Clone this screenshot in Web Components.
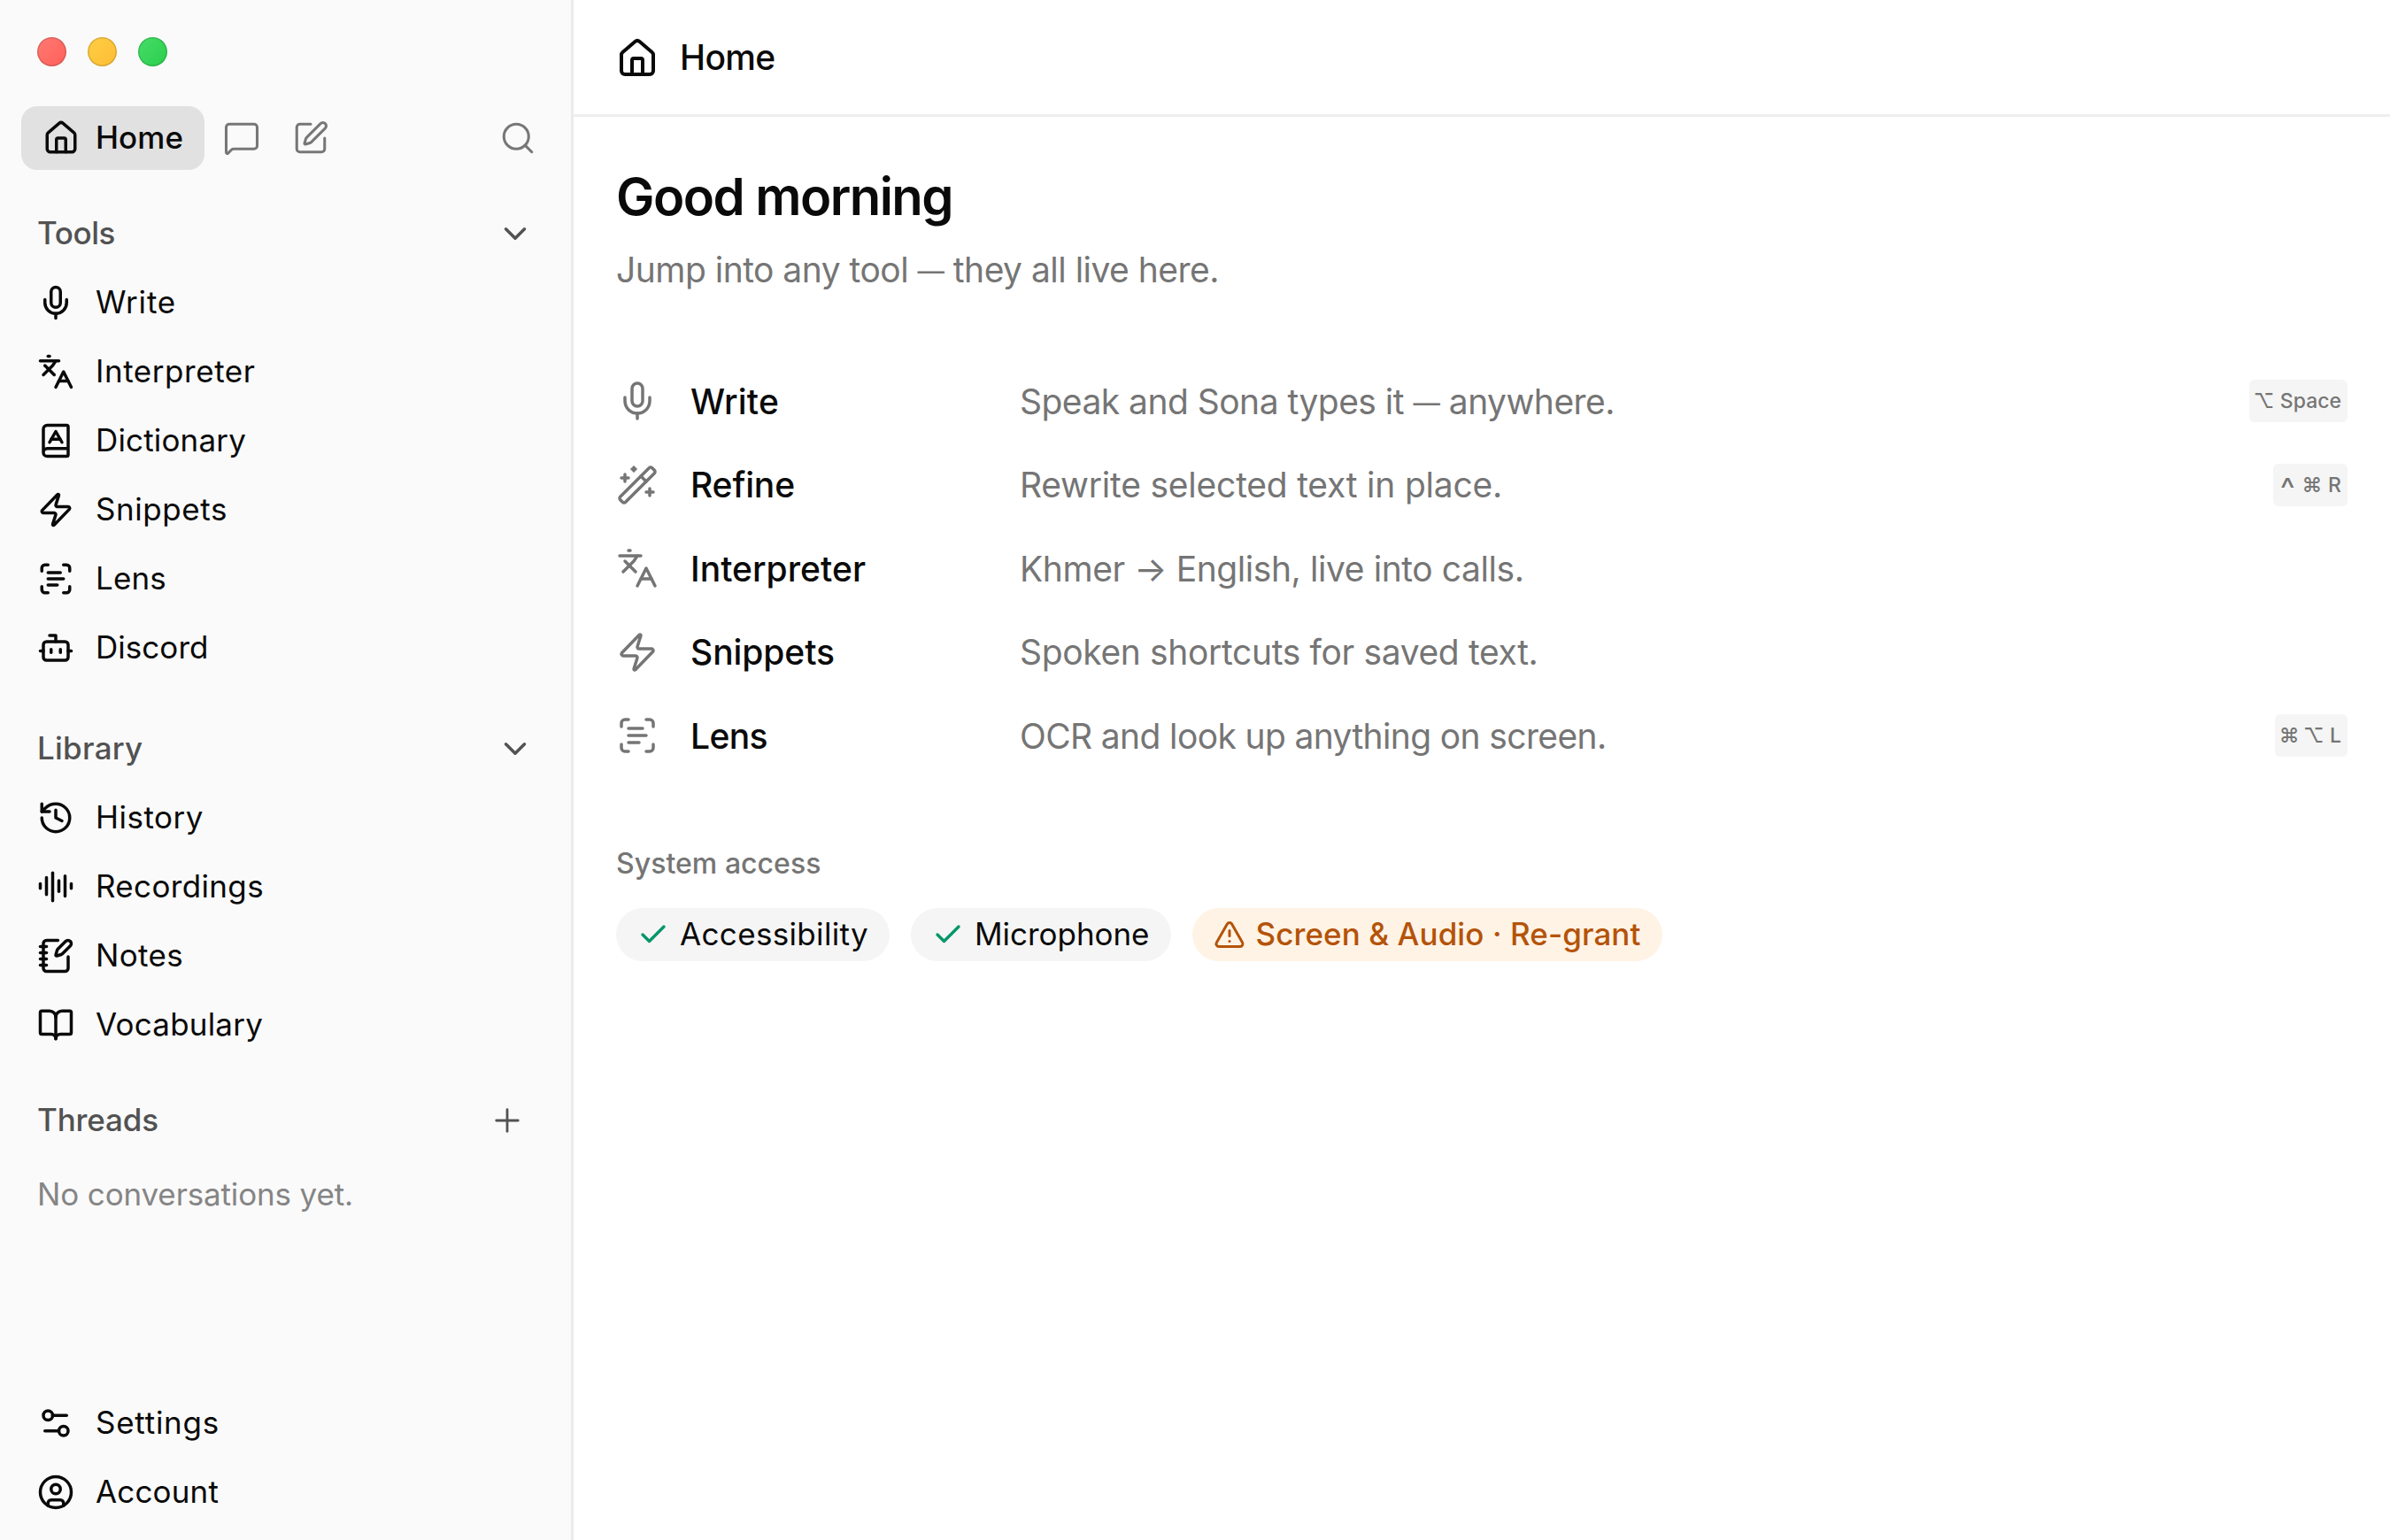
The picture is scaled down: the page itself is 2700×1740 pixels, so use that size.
<!DOCTYPE html>
<html lang="en">
<head>
<meta charset="utf-8">
<title>Sona</title>
<style>
    html, body {
        margin: 0;
        height: 100%;
        background: #fff;
    }
    body {
        font-family: Inter, "Liberation Sans", sans-serif;
        color: #0a0a0a;
    }
</style>
</head>
<body>
<sona-app>
    <sona-sidebar slot="sidebar">
        <nav-section label="Tools" width="88" icon="chevron">
            <nav-item icon="mic" width="91">Write</nav-item>
            <nav-item icon="languages" width="180.5">Interpreter</nav-item>
            <nav-item icon="dictionary" width="170">Dictionary</nav-item>
            <nav-item icon="zap" width="149">Snippets</nav-item>
            <nav-item icon="scan" width="80">Lens</nav-item>
            <nav-item icon="bot" width="127.5">Discord</nav-item>
        </nav-section>
        <nav-section class="library" label="Library" width="119.5" icon="chevron">
            <nav-item icon="history" width="122">History</nav-item>
            <nav-item icon="audio" width="190">Recordings</nav-item>
            <nav-item icon="notebook" width="99">Notes</nav-item>
            <nav-item icon="book" width="189">Vocabulary</nav-item>
        </nav-section>
        <nav-section class="threads" label="Threads" width="137" icon="plus">
            <fit-text class="empty" width="357">No conversations yet.</fit-text>
        </nav-section>
        <nav-item slot="footer" icon="settings" width="140">Settings</nav-item>
        <nav-item slot="footer" icon="user" width="139">Account</nav-item>
    </sona-sidebar>

    <page-header icon="house" width="107.5">Home</page-header>

    <home-page>
        <tool-row icon="mic" name="Write" width="100" info-width="672">Speak and Sona types it — anywhere.
            <key-combo slot="keys" keys="⌥ Space"></key-combo></tool-row>
        <tool-row icon="wand" name="Refine" width="118" info-width="545">Rewrite selected text in place.
            <key-combo slot="keys" keys="^ ⌘ R"></key-combo></tool-row>
        <tool-row icon="languages" name="Interpreter" width="198" info-width="569.5">Khmer → English, live into calls.</tool-row>
        <tool-row icon="zap" name="Snippets" width="163" info-width="585.5">Spoken shortcuts for saved text.</tool-row>
        <tool-row icon="scan" name="Lens" width="87" info-width="662.5">OCR and look up anything on screen.
            <key-combo slot="keys" keys="⌘ ⌥ L"></key-combo></tool-row>
        <access-pill slot="access" icon="check" width="213">Accessibility</access-pill>
        <access-pill slot="access" icon="check" width="197.5">Microphone</access-pill>
        <access-pill slot="access" icon="alert" width="435" warn>Screen &amp; Audio · Re-grant</access-pill>
    </home-page>
</sona-app>

<script>
const ICONS = {
    house: '<path d="M15 21v-8a1 1 0 0 0-1-1h-4a1 1 0 0 0-1 1v8"/><path d="M3 10a2 2 0 0 1 .709-1.528l7-6a2 2 0 0 1 2.582 0l7 6A2 2 0 0 1 21 10v9a2 2 0 0 1-2 2H5a2 2 0 0 1-2-2z"/>',
    message: '<path d="M22 17a2 2 0 0 1-2 2H6.828a2 2 0 0 0-1.414.586l-2.202 2.202A.71.71 0 0 1 2 21.286V5a2 2 0 0 1 2-2h16a2 2 0 0 1 2 2z"/>',
    compose: '<path d="M12 3H5a2 2 0 0 0-2 2v14a2 2 0 0 0 2 2h14a2 2 0 0 0 2-2v-7"/><path d="M18.375 2.625a1 1 0 0 1 3 3l-9.013 9.014a2 2 0 0 1-.853.505l-2.873.84a.5.5 0 0 1-.62-.62l.84-2.873a2 2 0 0 1 .506-.852z"/>',
    search: '<circle cx="11" cy="11" r="8"/><path d="m21 21-4.34-4.34"/>',
    chevron: '<path d="m6 9 6 6 6-6"/>',
    plus: '<path d="M5 12h14"/><path d="M12 5v14"/>',
    mic: '<path d="M12 19v3"/><path d="M19 10v2a7 7 0 0 1-14 0v-2"/><rect x="9" y="2" width="6" height="13" rx="3"/>',
    languages: '<path d="m5 8 6 6"/><path d="m4 14 6-6 2-3"/><path d="M2 5h12"/><path d="M7 2h1"/><path d="m22 22-5-10-5 10"/><path d="M14 18h6"/>',
    dictionary: '<path d="M4 19.5v-15A2.5 2.5 0 0 1 6.5 2H19a1 1 0 0 1 1 1v18a1 1 0 0 1-1 1H6.5a1 1 0 0 1 0-5H20"/><path d="m8 13 4-7 4 7"/><path d="M9.1 11h5.7"/>',
    zap: '<path d="M4 14a1 1 0 0 1-.78-1.63l9.9-10.2a.5.5 0 0 1 .86.46l-1.92 6.02A1 1 0 0 0 13 10h7a1 1 0 0 1 .78 1.63l-9.9 10.2a.5.5 0 0 1-.86-.46l1.92-6.02A1 1 0 0 0 11 14z"/>',
    scan: '<path d="M3 7V5a2 2 0 0 1 2-2h2"/><path d="M17 3h2a2 2 0 0 1 2 2v2"/><path d="M21 17v2a2 2 0 0 1-2 2h-2"/><path d="M7 21H5a2 2 0 0 1-2-2v-2"/><path d="M7 8h8"/><path d="M7 12h10"/><path d="M7 16h6"/>',
    bot: '<path d="M12 8V4H8"/><rect x="4" y="8" width="16" height="12" rx="2"/><path d="M2 14h2"/><path d="M20 14h2"/><path d="M15 13v2"/><path d="M9 13v2"/>',
    history: '<path d="M3 12a9 9 0 1 0 9-9 9.75 9.75 0 0 0-6.74 2.74L3 8"/><path d="M3 3v5h5"/><path d="M12 7v5l4 2"/>',
    audio: '<path d="M2 10v3"/><path d="M6 6v11"/><path d="M10 3v18"/><path d="M14 8v7"/><path d="M18 5v13"/><path d="M22 10v3"/>',
    notebook: '<path d="M13.4 2H6a2 2 0 0 0-2 2v16a2 2 0 0 0 2 2h12a2 2 0 0 0 2-2v-7.4"/><path d="M2 6h4"/><path d="M2 10h4"/><path d="M2 14h4"/><path d="M2 18h4"/><path d="M21.378 5.626a1 1 0 1 0-3.004-3.004l-5.01 5.012a2 2 0 0 0-.506.854l-.837 2.87a.5.5 0 0 0 .62.62l2.87-.837a2 2 0 0 0 .854-.506z"/>',
    book: '<path d="M12 7v14"/><path d="M3 18a1 1 0 0 1-1-1V4a1 1 0 0 1 1-1h5a4 4 0 0 1 4 4 4 4 0 0 1 4-4h5a1 1 0 0 1 1 1v13a1 1 0 0 1-1 1h-6a3 3 0 0 0-3 3 3 3 0 0 0-3-3z"/>',
    settings: '<path d="M14 17H5"/><path d="M19 7h-9"/><circle cx="17" cy="17" r="3"/><circle cx="7" cy="7" r="3"/>',
    user: '<circle cx="12" cy="12" r="10"/><circle cx="12" cy="10" r="3"/><path d="M7 20.662V19a2 2 0 0 1 2-2h6a2 2 0 0 1 2 2v1.662"/>',
    wand: '<path d="m21.64 3.64-1.28-1.28a1.21 1.21 0 0 0-1.72 0L2.36 18.64a1.21 1.21 0 0 0 0 1.72l1.28 1.28a1.2 1.2 0 0 0 1.72 0L21.64 5.36a1.2 1.2 0 0 0 0-1.72"/><path d="m14 7 3 3"/><path d="M5 6v4"/><path d="M19 14v4"/><path d="M10 2v2"/><path d="M7 8H3"/><path d="M21 16h-4"/><path d="M11 3H9"/>',
    check: '<path d="M20 6 9 17l-5-5"/>',
    alert: '<path d="m21.73 18-8-14a2 2 0 0 0-3.48 0l-8 14A2 2 0 0 0 4 21h16a2 2 0 0 0 1.73-3"/><path d="M12 9v4"/><path d="M12 17h.01"/>'
};

// Inter's em dash is very wide, so it is set a little smaller in running text
const shortDash = text => text.replace('—', '<span style="font-size: .78em; line-height: 0; vertical-align: .08em">—</span>');

// Base class: opens the shadow root and fills it from render()
class SonaElement extends HTMLElement {
    constructor() {
        super();
        this.attachShadow({ mode: 'open' });
    }

    connectedCallback() {
        this.shadowRoot.innerHTML = this.render();
    }

    attr(name, fallback = '') {
        return this.getAttribute(name) || fallback;
    }
}

class UiIcon extends SonaElement {
    render() {
        const size = this.attr('size', '42');
        return `
            <style>
                :host { display: block; flex: none; width: ${size}px; height: ${size}px; }
                svg { display: block; }
            </style>
            <svg width="${size}" height="${size}" viewBox="0 0 24 24" fill="none" stroke="currentColor"
                stroke-width="${this.attr('stroke', '2')}" stroke-linecap="round" stroke-linejoin="round">${ICONS[this.attr('name')]}</svg>
        `;
    }
}

// One line of text, tracked so that it fills the given width
class FitText extends SonaElement {
    connectedCallback() {
        super.connectedCallback();
        this.fit();
        document.fonts.ready.then(() => this.fit());
    }

    fit() {
        const span = this.shadowRoot.querySelector('span');
        const target = parseFloat(this.attr('width', '0'));
        const length = this.textContent.trim().length;
        span.style.letterSpacing = '0px';
        const natural = span.getBoundingClientRect().width;
        if (target && length && natural) {
            span.style.letterSpacing = (target - natural) / length + 'px';
        }
    }

    render() {
        return `
            <style>
                :host { display: block; flex: none; white-space: nowrap; width: ${this.attr('width')}px; }
                span { display: inline-block; }
            </style>
            <span><slot></slot></span>
        `;
    }
}

class SonaApp extends SonaElement {
    render() {
        return `
            <style>
                :host { display: flex; height: 1740px; overflow: hidden; }
                main { flex: 1; display: flex; flex-direction: column; min-width: 0; }
            </style>
            <slot name="sidebar"></slot>
            <main><slot></slot></main>
        `;
    }
}

class SonaSidebar extends SonaElement {
    render() {
        return `
            <style>
                :host {
                    display: flex;
                    flex-direction: column;
                    flex: none;
                    box-sizing: border-box;
                    width: 648px;
                    padding: 42px 24px 15px;
                    background: #fafafa;
                    border-right: 3px solid #ebebeb;
                    font-size: 35px;
                }
                .lights { display: flex; gap: 24px; padding-left: 18px; }
                .lights i {
                    width: 33px;
                    height: 33px;
                    border-radius: 50%;
                    box-shadow: inset 0 0 0 1.5px rgba(0, 0, 0, .14);
                }
                .red { background: linear-gradient(135deg, #ff7a73, #ff6058); }
                .yellow { background: linear-gradient(135deg, #ffcd44, #fdbe35); }
                .green { background: linear-gradient(135deg, #46dd68, #2ace4c); }
                .tabs { display: flex; gap: 6px; margin: 45px 0 33px; height: 72px; color: #777; }
                .tab { display: flex; align-items: center; justify-content: center; width: 72px; }
                .home {
                    box-sizing: border-box;
                    width: 207px;
                    gap: 18px;
                    border-radius: 18px;
                    background: #e1e1e1;
                    color: #0a0a0a;
                    font-weight: 500;
                }
                .home fit-text { padding-bottom: 2px; }
                .search { margin-left: auto; }
                ::slotted(.library) { margin-top: 36px; }
                ::slotted(.threads) { margin-top: 30px; }
                footer { margin-top: auto; }
            </style>
            <div class="lights"><i class="red"></i><i class="yellow"></i><i class="green"></i></div>
            <div class="tabs">
                <div class="tab home"><ui-icon name="house"></ui-icon><fit-text width="99">Home</fit-text></div>
                <div class="tab"><ui-icon name="message" stroke="1.75"></ui-icon></div>
                <div class="tab"><ui-icon name="compose" stroke="1.75"></ui-icon></div>
                <div class="tab search"><ui-icon name="search" stroke="1.75"></ui-icon></div>
            </div>
            <slot></slot>
            <footer><slot name="footer"></slot></footer>
        `;
    }
}

class NavSection extends SonaElement {
    render() {
        const plus = this.attr('icon') === 'plus';
        return `
            <style>
                :host { display: block; }
                header {
                    display: flex;
                    align-items: center;
                    justify-content: space-between;
                    height: 78px;
                    padding: 0 ${plus ? 27 : 18}px 0 18px;
                    color: #525252;
                    font-weight: 500;
                }
                header fit-text { padding-bottom: 2px; }
                ::slotted(.empty) { padding: 23px 0 0 18px; color: #858585; }
            </style>
            <header>
                <fit-text width="${this.attr('width')}">${this.attr('label')}</fit-text>
                <ui-icon name="${this.attr('icon')}" stroke="${plus ? 1.6 : 2}"></ui-icon>
            </header>
            <slot></slot>
        `;
    }
}

class NavItem extends SonaElement {
    render() {
        return `
            <style>
                :host { display: flex; align-items: center; gap: 24px; height: 78px; padding-left: 18px; }
                fit-text { padding-bottom: 2px; }
            </style>
            <ui-icon name="${this.attr('icon')}"></ui-icon>
            <fit-text width="${this.attr('width')}">${this.textContent}</fit-text>
        `;
    }
}

class PageHeader extends SonaElement {
    render() {
        return `
            <style>
                :host {
                    display: flex;
                    align-items: center;
                    gap: 24px;
                    height: 129px;
                    padding-left: 48px;
                    border-bottom: 3px solid #efefef;
                    font-size: 39px;
                    font-weight: 500;
                }
                ui-icon { margin-top: 2px; }
            </style>
            <ui-icon name="${this.attr('icon')}" size="48"></ui-icon>
            <fit-text width="${this.attr('width')}">${this.textContent}</fit-text>
        `;
    }
}

class HomePage extends SonaElement {
    render() {
        return `
            <style>
                :host { display: block; padding: 54px 48px; }
                h1 {
                    display: flex;
                    align-items: center;
                    margin: 0;
                    height: 72px;
                    font-size: 58px;
                    font-weight: 600;
                }
                .sub { display: flex; align-items: center; height: 60px; margin-top: 16px; font-size: 39px; color: #757575; }
                .tools { margin-top: 72px; }
                .access-title {
                    display: flex;
                    align-items: center;
                    height: 48px;
                    margin-top: 72.5px;
                    font-size: 32px;
                    font-weight: 500;
                    color: #757575;
                }
                .access { display: flex; gap: 24px; margin-top: 27px; }
            </style>
            <h1><fit-text width="380">Good morning</fit-text></h1>
            <div class="sub"><fit-text width="681">${shortDash('Jump into any tool — they all live here.')}</fit-text></div>
            <div class="tools"><slot></slot></div>
            <div class="access-title"><fit-text width="231.5">System access</fit-text></div>
            <div class="access"><slot name="access"></slot></div>
        `;
    }
}

class ToolRow extends SonaElement {
    render() {
        return `
            <style>
                :host { display: flex; align-items: center; height: 94.5px; font-size: 39px; }
                ui-icon { color: #757575; margin-right: 36px; }
                .name { width: 372px; font-weight: 500; }
                .info { color: #757575; }
                slot { display: block; margin-left: auto; }
            </style>
            <ui-icon name="${this.attr('icon')}" size="48" stroke="1.75"></ui-icon>
            <div class="name"><fit-text width="${this.attr('width')}">${this.attr('name')}</fit-text></div>
            <fit-text class="info" width="${this.attr('info-width')}">${shortDash(this.firstChild.textContent.trim())}</fit-text>
            <slot name="keys"></slot>
        `;
    }
}

class KeyCombo extends SonaElement {
    render() {
        const keys = this.attr('keys').split(' ').map(key => {
            if (key === '^') return `<span class="symbol caret">${key}</span>`;
            return `<span class="${'⌘⌥'.includes(key) ? 'symbol' : ''}">${key}</span>`;
        });
        return `
            <style>
                :host {
                    display: flex;
                    align-items: center;
                    gap: 9px;
                    height: 48px;
                    padding: 0 7px;
                    border-radius: 6px;
                    background: #f5f5f5;
                    color: #757575;
                    font-size: 23px;
                    font-weight: 500;
                }
                .symbol {
                    display: flex;
                    justify-content: center;
                    width: 18.5px;
                    font-family: Inter, "DejaVu Sans", sans-serif;
                }
                .caret {
                    margin-top: 9px;
                    font-size: 36px;
                    font-weight: 400;
                    line-height: 1;
                }
            </style>
            ${keys.join('')}
        `;
    }
}

class AccessPill extends SonaElement {
    render() {
        const warn = this.hasAttribute('warn');
        return `
            <style>
                :host {
                    display: flex;
                    align-items: center;
                    gap: 12px;
                    height: 60px;
                    padding: 0 24px;
                    border-radius: 30px;
                    background: ${warn ? '#fff3e6' : '#f5f5f5'};
                    color: ${warn ? '#b45309' : '#0a0a0a'};
                    font-size: 35px;
                    font-weight: ${warn ? 500 : 400};
                }
                ui-icon { color: ${warn ? '#b45309' : '#059669'}; }
                fit-text { padding-bottom: 2px; }
            </style>
            <ui-icon name="${this.attr('icon')}" size="36" stroke="${warn ? 2 : 2.25}"></ui-icon>
            <fit-text width="${this.attr('width')}">${this.textContent.replace('&', '&amp;')}</fit-text>
        `;
    }
}

customElements.define('ui-icon', UiIcon);
customElements.define('fit-text', FitText);
customElements.define('sona-app', SonaApp);
customElements.define('sona-sidebar', SonaSidebar);
customElements.define('nav-section', NavSection);
customElements.define('nav-item', NavItem);
customElements.define('page-header', PageHeader);
customElements.define('home-page', HomePage);
customElements.define('tool-row', ToolRow);
customElements.define('key-combo', KeyCombo);
customElements.define('access-pill', AccessPill);
</script>
</body>
</html>
